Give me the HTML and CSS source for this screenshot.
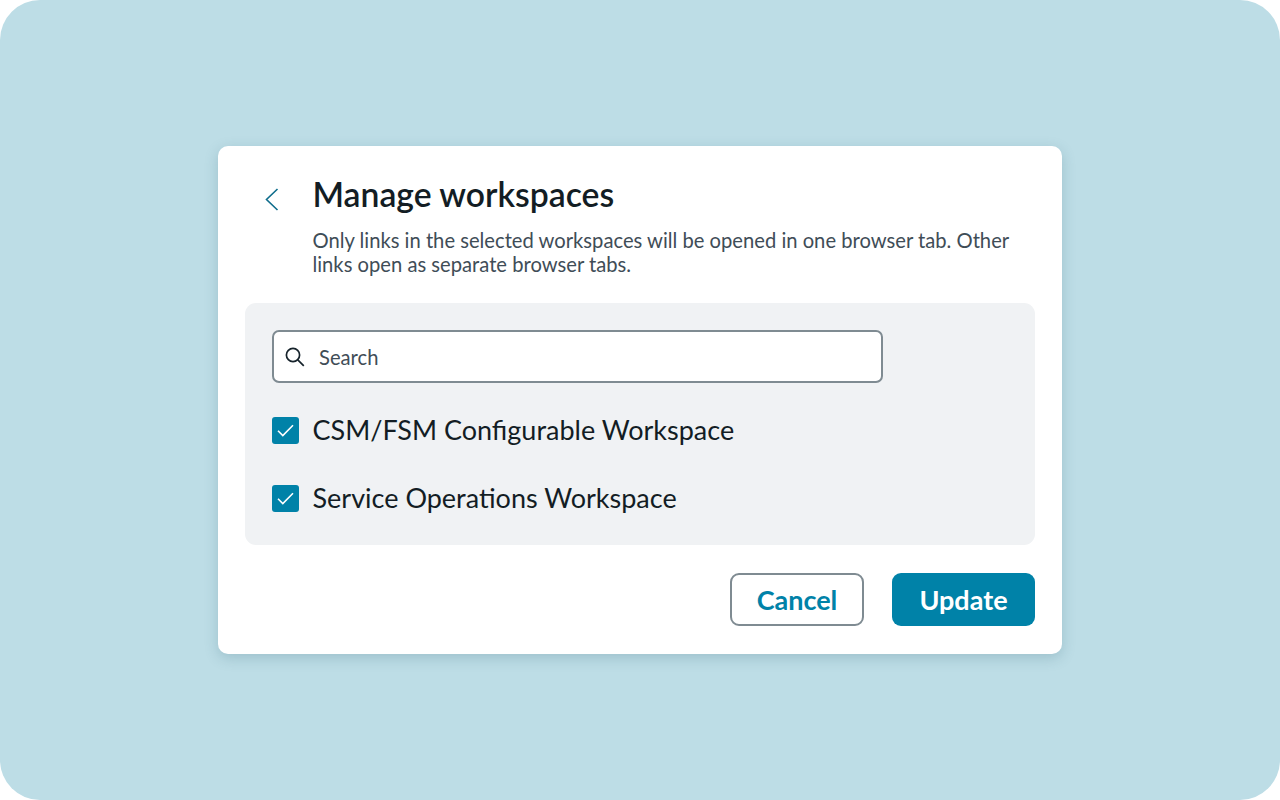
FILE: index.html
```html
<!DOCTYPE html>
<html lang="en">
  <head>
    <meta charset="UTF-8" />
    <title>Manage workspaces</title>
    <link rel="stylesheet" href="styles.css">
  </head>
  <body>
    <div class="screen">
      <div class="card">
        <div class="header">
          <button class="back" aria-label="Back">
            <svg width="14" height="24" viewBox="0 0 14 24" fill="none">
              <path d="M12.5 1 1.5 11.500l11 10.500" stroke="#0f6d8c" stroke-width="1.600" />
            </svg>
          </button>
          <div class="header-text">
            <h1>Manage workspaces</h1>
            <p>Only links in the selected workspaces will be opened in one browser tab. Other links open as separate browser tabs.</p>
          </div>
        </div>

        <div class="panel">
          <div class="search">
            <svg width="20" height="20" viewBox="0 0 20 20" fill="none">
              <circle cx="8" cy="8" r="6.600" stroke="#16232b" stroke-width="1.700" />
              <path d="m12.800 12.800 6 6" stroke="#16232b" stroke-width="1.700" />
            </svg>
            <span>Search</span>
          </div>
          <label class="option">
            <span class="check">
              <svg width="17" height="13" viewBox="0 0 17 13" fill="none">
                <path d="M1 6.800 5.800 11.500 16 1.200" stroke="#fff" stroke-width="1.600" />
              </svg>
            </span>
            <span class="option-label">CSM/FSM Configurable Workspace</span>
          </label>
          <label class="option">
            <span class="check">
              <svg width="17" height="13" viewBox="0 0 17 13" fill="none">
                <path d="M1 6.800 5.800 11.500 16 1.200" stroke="#fff" stroke-width="1.600" />
              </svg>
            </span>
            <span class="option-label">Service Operations Workspace</span>
          </label>
        </div>

        <div class="actions">
          <button class="btn btn-cancel">Cancel</button>
          <button class="btn btn-update">Update</button>
        </div>
      </div>
    </div>
  </body>
</html>
```

FILE: styles.css
```css
* {
  padding: 0;
  margin: 0;
  box-sizing: border-box;
}

body {
  background-color: #fff;
  font-family: Lato, "Open Sans", sans-serif;
  font-variant-ligatures: common-ligatures;
  text-rendering: optimizeLegibility;
}

.screen {
  width: 1280px;
  height: 800px;
  background-color: #bddde6;
  border-radius: 40px;
  display: flex;
  align-items: center;
  justify-content: center;
}

.card {
  width: 844px;
  height: 508px;
  background-color: #fff;
  border-radius: 10px;
  box-shadow: 0 4px 14px rgba(40, 90, 110, 0.22);
  padding: 27px;
}

.header {
  display: flex;
  height: 130px;
}

.back {
  width: 67.500px;
  flex-shrink: 0;
  height: 28px;
  margin-top: 14px;
  padding-left: 19.500px;
  background: none;
  border: none;
  text-align: left;
}

.header-text h1 {
  font-size: 33.700px;
  line-height: 43px;
  font-weight: 600;
  color: #131d24;
}

.header-text p {
  margin-top: 12px;
  font-size: 20.200px;
  line-height: 24px;
  color: #3f4d57;
}

.panel {
  height: 242px;
  background-color: #f0f2f4;
  border-radius: 11px;
  padding: 27px;
}

.search {
  width: 611px;
  height: 53px;
  background-color: #fff;
  border: 2px solid #7f8b92;
  border-radius: 7px;
  display: flex;
  align-items: center;
  gap: 14px;
  padding-left: 11px;
  font-size: 20.200px;
  color: #3f4d57;
  margin-bottom: 34px;
}

.option {
  display: flex;
  align-items: center;
  gap: 13.500px;
  height: 27px;
  margin-bottom: 41px;
  font-size: 27px;
  color: #131d24;
}

.option-label {
  margin-bottom: 2px;
}

.check {
  width: 27px;
  height: 27px;
  background-color: #0082a8;
  border-radius: 3px;
  display: flex;
  align-items: center;
  justify-content: center;
}

.actions {
  display: flex;
  justify-content: flex-end;
  gap: 28px;
  margin-top: 28px;
}

.btn {
  height: 53px;
  border-radius: 9px;
  font-family: inherit;
  font-size: 27px;
  font-weight: 700;
}

.btn-cancel {
  width: 134px;
  background-color: #fff;
  border: 2px solid #7f8b92;
  color: #0082a8;
}

.btn-update {
  width: 143px;
  background-color: #0082a8;
  border: none;
  color: #fff;
}
```
